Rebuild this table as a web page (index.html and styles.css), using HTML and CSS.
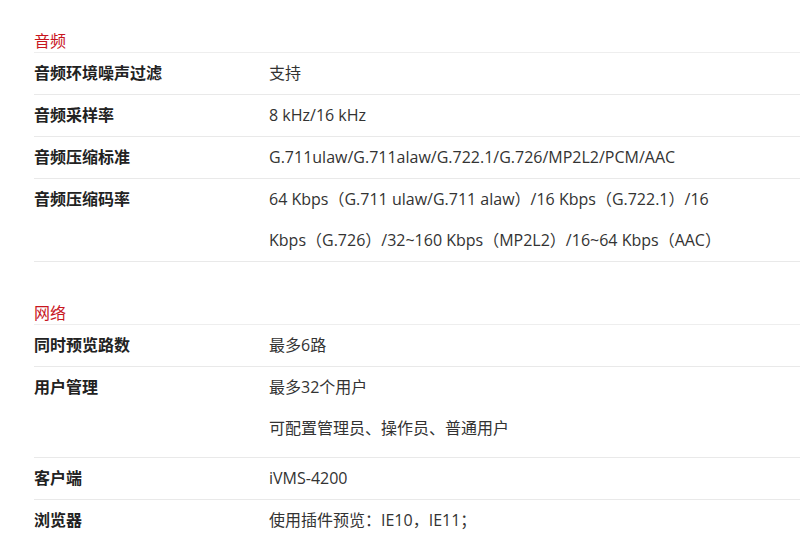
FILE: index.html
```html
<!DOCTYPE html>
<html lang="zh-CN">
<head>
  <meta charset="UTF-8" />
  <title>规格参数</title>
  <link rel="stylesheet" href="styles.css">
</head>
<body>
  <div class="specs">
    <section class="group">
      <h3 class="group-title">音频</h3>
      <div class="row">
        <div class="label">音频环境噪声过滤</div>
        <div class="value">支持</div>
      </div>
      <div class="row">
        <div class="label">音频采样率</div>
        <div class="value">8 kHz/16 kHz</div>
      </div>
      <div class="row">
        <div class="label">音频压缩标准</div>
        <div class="value">G.711ulaw/G.711alaw/G.722.1/G.726/MP2L2/PCM/AAC</div>
      </div>
      <div class="row">
        <div class="label">音频压缩码率</div>
        <div class="value">64 Kbps（G.711 ulaw/G.711 alaw）/16 Kbps（G.722.1）/16<br>Kbps（G.726）/32~160 Kbps（MP2L2）/16~64 Kbps（AAC）</div>
      </div>
    </section>

    <section class="group">
      <h3 class="group-title">网络</h3>
      <div class="row">
        <div class="label">同时预览路数</div>
        <div class="value">最多6路</div>
      </div>
      <div class="row row-tall">
        <div class="label">用户管理</div>
        <div class="value">
          <p>最多32个用户</p>
          <p>可配置管理员、操作员、普通用户</p>
        </div>
      </div>
      <div class="row">
        <div class="label">客户端</div>
        <div class="value">iVMS-4200</div>
      </div>
      <div class="row">
        <div class="label">浏览器</div>
        <div class="value">使用插件预览：IE10，IE11；</div>
      </div>
    </section>
  </div>
</body>
</html>
```

FILE: styles.css
```css
body {
  margin: 0;
  padding: 0;
  background: #fff;
  font-family: 'Open Sans', 'Noto Sans CJK SC', sans-serif;
  font-size: 16px;
  color: #333;
}

.specs {
  padding: 30px 0 0 34px;
}

.group + .group {
  margin-top: 40px;
}

.group-title {
  margin: 0;
  font-size: 16px;
  font-weight: normal;
  line-height: 22px;
  color: #c8161e;
  border-bottom: 1px solid #eee;
}

.row {
  display: grid;
  grid-template-columns: 235px 1fr;
  line-height: 41px;
  border-bottom: 1px solid #e9e9e9;
}

.group:last-child .row:last-child {
  border-bottom: none;
}

.row-tall {
  padding-bottom: 8px;
}

.label {
  font-weight: bold;
  color: #222;
}

.value {
  color: #333;
}

.value p {
  margin: 0;
}
```
